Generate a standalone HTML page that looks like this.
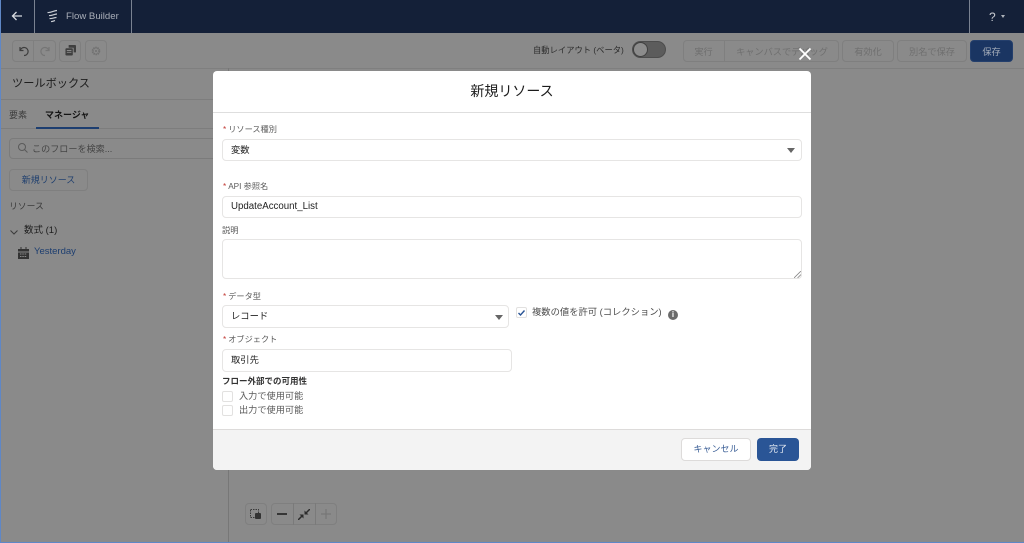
<!DOCTYPE html>
<html lang="ja"><head><meta charset="utf-8"><title>Flow Builder</title>
<style>
*{box-sizing:border-box}
html,body{margin:0;padding:0;width:1024px;height:543px;overflow:hidden;background:#8a8a8a}
body{font-family:"Liberation Sans","Noto Sans CJK JP",sans-serif;color:#1f1f1f;position:relative}
#w{position:absolute;left:0;top:0;width:1024px;height:543px;overflow:hidden;filter:blur(.35px)}
.a{position:absolute;white-space:nowrap}
.t{position:absolute;white-space:nowrap;line-height:14px}
.btn{position:absolute;border:1px solid #7f7f7f;border-radius:4px}
.d{color:#6f6f6f;font-size:9.200px;text-align:center;line-height:20px;position:absolute;white-space:nowrap}
.lab{position:absolute;white-space:nowrap;font-size:8.200px;color:#5a5a5a;line-height:12px}
.lab b{color:#c23934;font-weight:400;margin-right:2px}
.inp{position:absolute;border:1px solid #e6e5e4;border-radius:4px;background:#fff;font-size:9.300px;color:#222;padding-left:8px}
.cb{position:absolute;width:11px;height:11px;border:1px solid #e2e1e0;border-radius:2px;background:#fff}
</style></head><body><div id="w">
<div class="a" style="left:0;top:0;width:1024px;height:33px;background:#142038"></div>
<div class="a" style="left:34px;top:0;width:1px;height:33px;background:#7a8291"></div>
<div class="a" style="left:131px;top:0;width:1px;height:33px;background:#7a8291"></div>
<div class="a" style="left:969px;top:0;width:1px;height:33px;background:#7a8291"></div>
<svg class="a" style="left:10px;top:9px" width="14" height="14" viewBox="0 0 14 14"><path d="M12 7H2.500M6.500 3 2.500 7l4 4" fill="none" stroke="#d8dbe0" stroke-width="1.300"/></svg>
<svg class="a" style="left:46px;top:9px" width="13" height="15" viewBox="0 0 13 15"><path d="M1.500 3.500C5 4 8 1.500 11 1.500M3 6.500C6 7 8 5 11 5M3.500 9.500C6 10 8 8.500 10.500 8.500M5 12.500C6.500 12.800 7.500 12 9 11.500" fill="none" stroke="#c6cad1" stroke-width="1.200"/></svg>
<div class="t" style="left:66px;top:10px;font-size:9.600px;color:#a9aeb8">Flow Builder</div>
<div class="t" style="left:989px;top:10px;font-size:12px;color:#c9ccd2">?</div>
<div class="a" style="left:1001px;top:15px;border:2px solid transparent;border-top:3px solid #aeb2ba"></div>

<div class="a" style="left:0;top:68px;width:1024px;height:1px;background:#7f7f7f"></div>
<div class="btn" style="left:12px;top:40px;width:44px;height:22px"></div>
<div class="a" style="left:33px;top:40px;width:1px;height:22px;background:#7f7f7f"></div>
<svg class="a" style="left:17px;top:44px" width="14" height="14" viewBox="0 0 14 14"><path d="M3 3v3.500h3.500M3.300 6.300A4 4 0 1 1 7 11.500" fill="none" stroke="#3e3e3e" stroke-width="1.200"/></svg>
<svg class="a" style="left:38px;top:44px" width="14" height="14" viewBox="0 0 14 14"><path d="M11 3v3.500H7.500M10.700 6.300A4 4 0 1 0 7 11.500" fill="none" stroke="#757575" stroke-width="1.200"/></svg>
<div class="btn" style="left:59px;top:40px;width:22px;height:22px"></div>
<svg class="a" style="left:65px;top:45px" width="11" height="11" viewBox="0 0 12 12"><path d="M4 0h7a1 1 0 0 1 1 1v7H9.500V3H4z" fill="#3f3f3f"/><rect x="0.500" y="3.500" width="8" height="8" rx="1" fill="#3f3f3f"/><path d="M2 6h5M2 8h5" stroke="#8a8a8a"/></svg>
<div class="btn" style="left:85px;top:40px;width:22px;height:22px"></div>
<svg class="a" style="left:91px;top:46px" width="10" height="10" viewBox="0 0 10 10"><circle cx="5" cy="5" r="3.300" fill="none" stroke="#717171" stroke-width="2" stroke-dasharray="1.500 .6"/><circle cx="5" cy="5" r="1" fill="#717171"/></svg>

<div class="t" style="left:533px;top:43px;font-size:8.300px;color:#2c2c2c">自動レイアウト (ベータ)</div>
<div class="a" style="left:632px;top:41px;width:34px;height:17px;border-radius:9px;background:#5c5c5c;border:1px solid #4d4d4d"></div>
<div class="a" style="left:633px;top:42px;width:15px;height:15px;border-radius:50%;background:#8c8c8c;border:1px solid #3f3f3f"></div>
<div class="btn" style="left:683px;top:40px;width:156px;height:22px"></div>
<div class="a" style="left:724px;top:40px;width:1px;height:22px;background:#7f7f7f"></div>
<div class="d" style="left:683px;top:42px;width:41px">実行</div>
<div class="d" style="left:725px;top:42px;width:114px">キャンバスでデバッグ</div>
<div class="btn" style="left:842px;top:40px;width:52px;height:22px"></div>
<div class="d" style="left:842px;top:42px;width:52px">有効化</div>
<div class="btn" style="left:897px;top:40px;width:70px;height:22px"></div>
<div class="d" style="left:897px;top:42px;width:70px">別名で保存</div>
<div class="a" style="left:970px;top:40px;width:43px;height:22px;background:#1a3562;border-radius:4px;border:1px solid #243f6c"></div>
<div class="d" style="left:970px;top:42px;width:43px;color:#a5adba">保存</div>

<div class="a" style="left:228px;top:68px;width:1px;height:475px;background:#777"></div>
<div class="t" style="left:12px;top:77px;font-size:11.200px;color:#1e1e1e">ツールボックス</div>
<div class="a" style="left:0;top:99px;width:228px;height:1px;background:#7d7d7d"></div>
<div class="t" style="left:9px;top:108px;font-size:9px;color:#3c3c3c">要素</div>
<div class="t" style="left:45px;top:108px;font-size:9px;font-weight:700;color:#141414">マネージャ</div>
<div class="a" style="left:0;top:128px;width:228px;height:1px;background:#7d7d7d"></div>
<div class="a" style="left:36px;top:127px;width:63px;height:2px;background:#1d3e70"></div>
<div class="a" style="left:9px;top:138px;width:210px;height:21px;border:1px solid #7b7b7b;border-radius:4px"></div>
<svg class="a" style="left:17px;top:142px" width="12" height="12" viewBox="0 0 12 12"><circle cx="5" cy="5" r="3.500" fill="none" stroke="#5a5a5a"/><path d="m7.500 7.500 3 3" stroke="#5a5a5a"/></svg>
<div class="t" style="left:32px;top:142px;font-size:9.100px;color:#454545">このフローを検索...</div>
<div class="btn" style="left:9px;top:169px;width:79px;height:22px"></div>
<div class="t" style="left:9px;top:173px;width:79px;text-align:center;font-size:9px;color:#20406f">新規リソース</div>
<div class="t" style="left:9px;top:199px;font-size:8.800px;color:#3b3b3b">リソース</div>
<svg class="a" style="left:9px;top:229px" width="10" height="7" viewBox="0 0 10 7"><path d="m1.500 1.500 3.500 3.500 3.500-3.500" fill="none" stroke="#3b3b3b"/></svg>
<div class="t" style="left:24px;top:224px;font-size:9.500px;color:#1e1e1e">数式 (1)</div>
<svg class="a" style="left:18px;top:247px" width="11" height="12" viewBox="0 0 11 12"><path d="M0 2h11v2.500H0zM0 5.500h11V12H0z" fill="#333"/><path d="M3 0v2M8 0v2" stroke="#333"/><path d="M2 7h7M2 9.500h7" stroke="#8a8a8a" stroke-dasharray="1.500 .8"/></svg>
<div class="t" style="left:34px;top:245px;font-size:9.500px;color:#1d3e70">Yesterday</div>

<div class="btn" style="left:245px;top:503px;width:22px;height:22px"></div>
<svg class="a" style="left:250px;top:509px" width="12" height="11" viewBox="0 0 12 11"><rect x=".5" y=".5" width="8" height="8" fill="none" stroke="#3a3a3a" stroke-dasharray="1.500 1"/><rect x="5" y="4" width="6" height="6" rx="1" fill="#333"/></svg>
<div class="btn" style="left:271px;top:503px;width:66px;height:22px"></div>
<div class="a" style="left:293px;top:503px;width:1px;height:22px;background:#7a7a7a"></div>
<div class="a" style="left:315px;top:503px;width:1px;height:22px;background:#7a7a7a"></div>
<div class="a" style="left:277px;top:513px;width:10px;height:2px;background:#363636"></div>
<svg class="a" style="left:298px;top:509px" width="12" height="11" viewBox="0 0 12 11"><path d="M0 11 4.500 6.500M7.500 4.500 12 0" stroke="#2c2c2c" stroke-width="1.500"/><path d="M1.500 5.500h4v4zM6.500 5.500v-4l4 4z" fill="#2c2c2c"/></svg>
<svg class="a" style="left:321px;top:509px" width="10" height="10" viewBox="0 0 10 10"><path d="M5 0v10M0 5h10" stroke="#737373"/></svg>

<div class="a" style="left:213px;top:71px;width:598px;height:399px;background:#fff;border-radius:4px;overflow:hidden">
<div class="a" style="left:0;top:41px;width:598px;height:1px;background:#dedede"></div>
<div class="a" style="left:0;top:1px;width:598px;height:41px;text-align:center;font-size:14px;line-height:39px;color:#1c1c1c">新規リソース</div>
<div class="a" style="left:0;top:358px;width:598px;height:41px;background:#f3f3f3;border-top:1px solid #dddbda"></div>
</div>
<svg class="a" style="left:798px;top:47px" width="14" height="14" viewBox="0 0 14 14"><path d="m1.500 1.500 11 11M12.500 1.500l-11 11" stroke="#fff" stroke-width="1.800"/></svg>

<div class="lab" style="left:223px;top:124px"><b>*</b>リソース種別</div>
<div class="inp" style="left:222px;top:139px;width:580px;height:22px;line-height:20px">変数</div>
<div class="a" style="left:787px;top:148px;border:4px solid transparent;border-top:5px solid #666;border-bottom:0"></div>
<div class="lab" style="left:223px;top:181px"><b>*</b>API 参照名</div>
<div class="inp" style="left:222px;top:196px;width:580px;height:22px;line-height:20px;font-size:9.700px">UpdateAccount_List</div>
<div class="lab" style="left:222px;top:225px">説明</div>
<div class="inp" style="left:222px;top:239px;width:580px;height:40px"></div>
<svg class="a" style="left:794px;top:271px" width="7" height="7" viewBox="0 0 7 7"><path d="M0 7 7 0M3.500 7 7 3.500" stroke="#888" stroke-width=".8"/></svg>
<div class="lab" style="left:223px;top:291px"><b>*</b>データ型</div>
<div class="inp" style="left:222px;top:305px;width:287px;height:23px;line-height:20px">レコード</div>
<div class="a" style="left:495px;top:315px;border:4px solid transparent;border-top:5px solid #666;border-bottom:0"></div>
<div class="cb" style="left:516px;top:307px"></div>
<svg class="a" style="left:517px;top:309px" width="9" height="8" viewBox="0 0 9 8"><path d="m1.500 4 2 2 4-4.500" fill="none" stroke="#2a5596" stroke-width="1.400"/></svg>
<div class="t" style="left:532px;top:305px;font-size:9.300px;color:#4c4c4c">複数の値を許可 (コレクション)</div>
<div class="a" style="left:668px;top:310px;width:10px;height:10px;border-radius:50%;background:#6a6a6a;color:#fff;font-size:8px;line-height:10px;text-align:center;font-weight:700">i</div>
<div class="lab" style="left:223px;top:334px"><b>*</b>オブジェクト</div>
<div class="inp" style="left:222px;top:349px;width:290px;height:23px;line-height:20px">取引先</div>
<div class="lab" style="left:222px;top:375px;font-weight:700;color:#333;font-size:8.500px">フロー外部での可用性</div>
<div class="cb" style="left:222px;top:391px"></div>
<div class="lab" style="left:239px;top:390px;font-size:9.200px">入力で使用可能</div>
<div class="cb" style="left:222px;top:405px"></div>
<div class="lab" style="left:239px;top:404px;font-size:9.200px">出力で使用可能</div>
<div class="a" style="left:681px;top:438px;width:70px;height:23px;background:#fff;border:1px solid #dddbda;border-radius:4px;color:#3a5e96;font-size:9px;text-align:center;line-height:21px">キャンセル</div>
<div class="a" style="left:757px;top:438px;width:42px;height:23px;background:#2a5596;border-radius:4px;color:#e6ebf3;font-size:9px;text-align:center;line-height:23px">完了</div>

<div class="a" style="left:0;top:0;width:1px;height:543px;background:#5f87c6"></div>
<div class="a" style="left:0;top:542px;width:1024px;height:1px;background:#5f87c6"></div>
</div></body></html>
